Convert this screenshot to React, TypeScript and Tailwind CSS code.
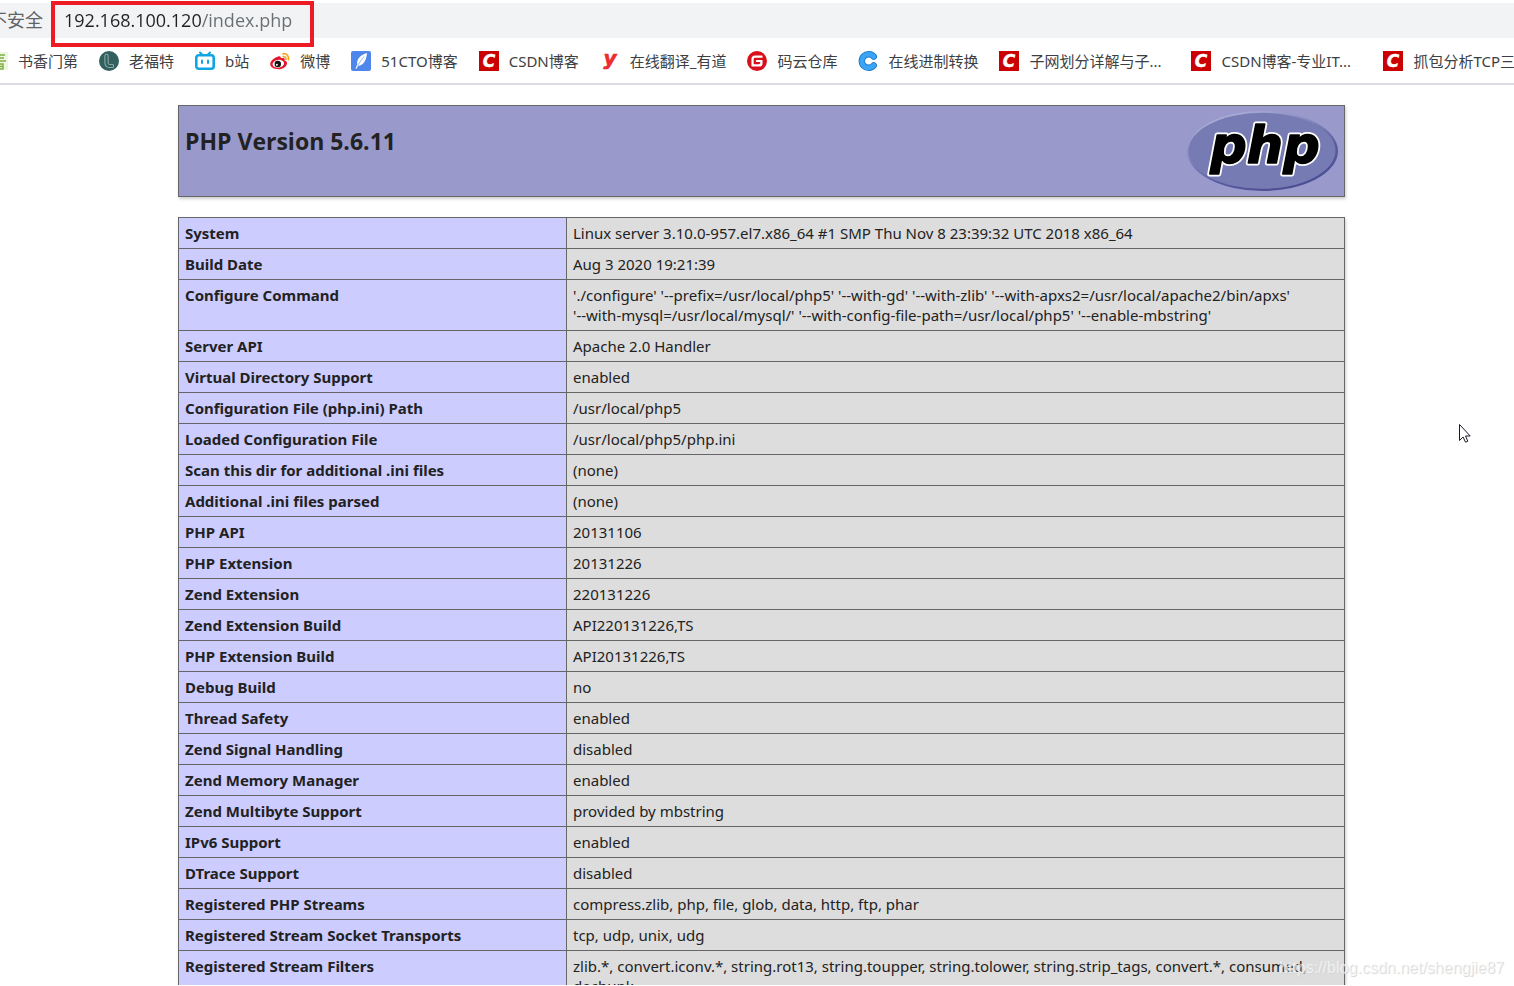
import type { ReactNode } from "react"
import { SiGitee } from "react-icons/si"

const CsdnIcon = () => (
    <svg className="size-5" viewBox="0 0 20 20" aria-hidden="true">
        <rect width="20" height="20" fill="#cb0000" />
        <text x="10" y="16" textAnchor="middle" fontFamily="DejaVu Sans" fontWeight="700" fontStyle="italic" fontSize="17" fill="#fff" stroke="#fff" strokeWidth="0.4">C</text>
    </svg>
)

const LeafIcon = () => (
    <svg className="size-5" viewBox="0 0 20 20" aria-hidden="true">
        <rect y="1" width="20" height="18" fill="#eef6df" />
        <path d="M3 4h14M10 2v7M4 7h12M2 10h16M5 13h10v5H5zM5 15.500h10" stroke="#7fae45" strokeWidth="1.4" fill="none" />
    </svg>
)

const LofterIcon = () => (
    <svg className="size-5" viewBox="0 0 20 20" aria-hidden="true">
        <circle cx="10" cy="10" r="10" fill="#32605f" />
        <path d="M7.500 4.800v7.200a3 3 0 0 0 3 3h2.600" stroke="#a9bfbe" strokeWidth="4" strokeLinecap="round" fill="none" />
        <path d="M7.500 4.800v7.200a3 3 0 0 0 3 3h2.600" stroke="#32605f" strokeWidth="2.400" strokeLinecap="round" fill="none" />
    </svg>
)

const BiliIcon = () => (
    <svg className="size-5" viewBox="0 0 20 20" fill="none" stroke="#0ea5e2" strokeLinecap="round" aria-hidden="true">
        <path d="M5 1.5 7.5 4M15 1.5 12.5 4" strokeWidth="2" />
        <rect x="1.3" y="4.3" width="17.4" height="13.4" rx="2.5" strokeWidth="2.6" />
        <path d="M7 9.5v2.5M13 9.5v2.5" strokeWidth="2" />
    </svg>
)

const WeiboIcon = () => (
    <svg className="size-5" viewBox="0 0 20 20" aria-hidden="true">
        <path d="M8.2 5.400c1-.4 2.200-.3 2.500.5.2.5.1 1 0 1.400 1.700-.6 3.600-.6 4 .7.200.6-.1 1.100-.1 1.400 1.500.4 2.600 1.400 2.400 3-.3 3-4 5.800-8.400 5.800C4 18.200.2 16.300.2 13c0-3.500 4.700-6.700 8-7.600z" fill="#e6162d" />
        <ellipse cx="8.300" cy="12.800" rx="5.800" ry="3.900" fill="#fff" transform="rotate(-8 8.300 12.800)" />
        <circle cx="7.800" cy="13" r="3.200" fill="#111" />
        <circle cx="6.900" cy="13.800" r="1" fill="#fff" />
        <path d="M13 2.800c3.600-.6 6.300 2.400 5.400 6M13.300 5.600c1.800-.3 3 1.100 2.600 2.800" stroke="#f5a623" strokeWidth="1.700" strokeLinecap="round" fill="none" />
    </svg>
)

const FeatherIcon = () => (
    <svg className="size-5" viewBox="0 0 20 20" aria-hidden="true">
        <rect width="20" height="20" rx="2" fill="#4f86ec" />
        <path d="M16 2C10 3.500 5.500 8 6.200 13.500L4.500 17.500l1 .3 1.700-3C12.500 14.500 15.500 9 16 2z" fill="#fff" />
        <path d="M6.500 14.500 13 5.500" stroke="#4f86ec" strokeWidth=".6" />
    </svg>
)

const YoudaoIcon = () => (
    <svg className="size-5 overflow-visible" viewBox="0 0 20 20" aria-hidden="true">
        <text x="10" y="14" textAnchor="middle" fontFamily="DejaVu Sans" fontWeight="700" fontStyle="italic" fontSize="20" fill="#ee2a2e" stroke="#ee2a2e" strokeWidth="0.6">y</text>
    </svg>
)

const ConvertIcon = () => (
    <svg className="size-5" viewBox="0 0 20 20" aria-hidden="true">
        <path d="M15.800 5.600A6.800 6.800 0 1 0 15.800 14.400" stroke="#1976c8" strokeWidth="6.400" strokeLinecap="round" fill="none" />
        <path d="M15.800 5.600A6.800 6.800 0 1 0 15.800 14.400" stroke="#3ba4f4" strokeWidth="4.800" strokeLinecap="round" fill="none" />
    </svg>
)

const BOOKMARKS: { name: string; icon: ReactNode; fixed?: boolean }[] = [
    { name: '书香门第', icon: <LeafIcon /> },
    { name: '老福特', icon: <LofterIcon /> },
    { name: 'b站', icon: <BiliIcon /> },
    { name: '微博', icon: <WeiboIcon /> },
    { name: '51CTO博客', icon: <FeatherIcon /> },
    { name: 'CSDN博客', icon: <CsdnIcon /> },
    { name: '在线翻译_有道', icon: <YoudaoIcon /> },
    { name: '码云仓库', icon: <SiGitee className="size-5 text-[#d7101b]" /> },
    { name: '在线进制转换', icon: <ConvertIcon /> },
    { name: '子网划分详解与子...', icon: <CsdnIcon />, fixed: true },
    { name: 'CSDN博客-专业IT...', icon: <CsdnIcon />, fixed: true },
    { name: '抓包分析TCP三', icon: <CsdnIcon />, fixed: true },
]

const ROWS: { label: string; value: ReactNode }[] = [
    { label: 'System', value: 'Linux server 3.10.0-957.el7.x86_64 #1 SMP Thu Nov 8 23:39:32 UTC 2018 x86_64' },
    { label: 'Build Date', value: 'Aug 3 2020 19:21:39' },
    {
        label: 'Configure Command',
        value: <>
            './configure' '--prefix=/usr/local/php5' '--with-gd' '--with-zlib' '--with-apxs2=/usr/local/apache2/bin/apxs'<br />
            '--with-mysql=/usr/local/mysql/' '--with-config-file-path=/usr/local/php5' '--enable-mbstring'
        </>,
    },
    { label: 'Server API', value: 'Apache 2.0 Handler' },
    { label: 'Virtual Directory Support', value: 'enabled' },
    { label: 'Configuration File (php.ini) Path', value: '/usr/local/php5' },
    { label: 'Loaded Configuration File', value: '/usr/local/php5/php.ini' },
    { label: 'Scan this dir for additional .ini files', value: '(none)' },
    { label: 'Additional .ini files parsed', value: '(none)' },
    { label: 'PHP API', value: '20131106' },
    { label: 'PHP Extension', value: '20131226' },
    { label: 'Zend Extension', value: '220131226' },
    { label: 'Zend Extension Build', value: 'API220131226,TS' },
    { label: 'PHP Extension Build', value: 'API20131226,TS' },
    { label: 'Debug Build', value: 'no' },
    { label: 'Thread Safety', value: 'enabled' },
    { label: 'Zend Signal Handling', value: 'disabled' },
    { label: 'Zend Memory Manager', value: 'enabled' },
    { label: 'Zend Multibyte Support', value: 'provided by mbstring' },
    { label: 'IPv6 Support', value: 'enabled' },
    { label: 'DTrace Support', value: 'disabled' },
    { label: 'Registered PHP Streams', value: 'compress.zlib, php, file, glob, data, http, ftp, phar' },
    { label: 'Registered Stream Socket Transports', value: 'tcp, udp, unix, udg' },
    {
        label: 'Registered Stream Filters',
        value: <>
            zlib.*, convert.iconv.*, string.rot13, string.toupper, string.tolower, string.strip_tags, convert.*, consumed,<br />
            dechunk
        </>,
    },
]

const PhpLogo = () => (
    <svg className="h-20 w-[151px]" viewBox="0 0 151 80" role="img" aria-label="PHP logo">
        <defs>
            <linearGradient id="rim" x1="0.2" y1="0" x2="0.8" y2="1">
                <stop offset="0" stopColor="#b4b6dc" />
                <stop offset="0.35" stopColor="#8488bd" />
                <stop offset="0.65" stopColor="#5a5c9f" />
                <stop offset="1" stopColor="#484a91" />
            </linearGradient>
        </defs>
        <ellipse cx="75.500" cy="40" rx="75.500" ry="40" fill="url(#rim)" />
        <ellipse cx="75" cy="39.800" rx="73.500" ry="38" fill="#777bb3" />
        <g
            textAnchor="middle"
            fontFamily="DejaVu Sans"
            fontWeight="700"
            fontStyle="italic"
            fontSize="51"
            strokeLinejoin="round"
            paintOrder="stroke"
        >
            <text x="78" y="52" fill="#000" stroke="#fff" strokeWidth="5">php</text>
            <text x="78" y="52" fill="#000" stroke="#000" strokeWidth="1.5" aria-hidden="true">php</text>
        </g>
    </svg>
)

const BrowserBar = () => {
    return <header className="relative border-b-2 border-[#dadce0] bg-white pt-[3px]">
        <div className="flex h-[35px] items-center bg-[#f1f3f4] pb-0.5 text-lg leading-6 text-[#5f6368]">
            <span className="-ml-[11px] whitespace-nowrap">不安全</span>
            <span className="ml-2 h-5 w-px bg-[#9aa0a6]" />
            <input
                type="text"
                aria-label="Address"
                defaultValue="192.168.100.120/index.php"
                className="ml-3 min-w-0 flex-1 bg-[linear-gradient(90deg,#202124_138px,#6b6f73_138px)] bg-clip-text text-transparent outline-none"
            />
        </div>
        <nav className="-ml-3 flex h-[45px] items-center gap-[21px] overflow-hidden font-['Noto_Sans','Noto_Sans_CJK_SC',sans-serif] text-[15px] leading-5 text-[#3c4043]" aria-label="Bookmarks">
            {BOOKMARKS.map((item) => (
                <a key={item.name} href="#" className="flex shrink-0 items-center gap-2.5 whitespace-nowrap">
                    {item.icon}
                    <span className={item.fixed ? "w-[141px]" : ""}>{item.name}</span>
                </a>
            ))}
        </nav>
        {/* red highlight around the address */}
        <div className="pointer-events-none absolute top-px left-[51px] h-[46px] w-[263px] border-4 border-[#ed1c24]" />
    </header>
}

const App = () => {
    return <div className="relative flex h-screen flex-col overflow-hidden bg-white font-['Open_Sans','Noto_Sans_CJK_SC',sans-serif] text-[#222]">
        <BrowserBar />
        <main className="min-h-0 flex-1 overflow-hidden pt-5 pl-[9px] font-['Noto_Sans',sans-serif] text-[15px] leading-5">
            <div className="mx-auto flex max-w-[1167px] flex-col gap-5">
                <div className="flex items-start justify-between border border-[#666] bg-[#9999cc] px-1.5 py-[5px] shadow-[1px_2px_3px_#ccc]">
                    <h1 className="pt-3.5 font-['Open_Sans',sans-serif] text-[23px] leading-8 font-bold">PHP Version 5.6.11</h1>
                    <a href="#"><PhpLogo /></a>
                </div>
                <table className="w-full table-fixed border-collapse shadow-[1px_2px_3px_#ccc]">
                    <colgroup>
                        <col className="w-[388px]" />
                        <col />
                    </colgroup>
                    <tbody>
                        {ROWS.map((row) => (
                            <tr key={row.label}>
                                <th scope="row" className="border border-[#666] bg-[#ccccff] px-1.5 py-[5px] text-left align-top font-bold">{row.label}</th>
                                <td className="border border-[#666] bg-[#dddddd] px-1.5 py-[5px] align-top whitespace-nowrap">{row.value}</td>
                            </tr>
                        ))}
                    </tbody>
                </table>
            </div>
        </main>
        <div className="absolute right-2.5 bottom-2 font-['Liberation_Sans',sans-serif] text-base leading-5 text-white/60 [text-shadow:1px_1px_1px_#d4d4d4]">
            https://blog.csdn.net/shengjie87
        </div>
        <svg className="absolute top-[423px] left-[1458px] h-5 w-3.5" viewBox="0 0 14 20" aria-hidden="true">
            <path d="M1.500 1.500v16l3.600-3.500 2.400 5.200 2.300-1-2.300-5.200h4.700z" fill="#fff" stroke="#1a1a2a" strokeWidth="1" />
        </svg>
        <div className="h-px bg-white" />
    </div>
}

export default App
